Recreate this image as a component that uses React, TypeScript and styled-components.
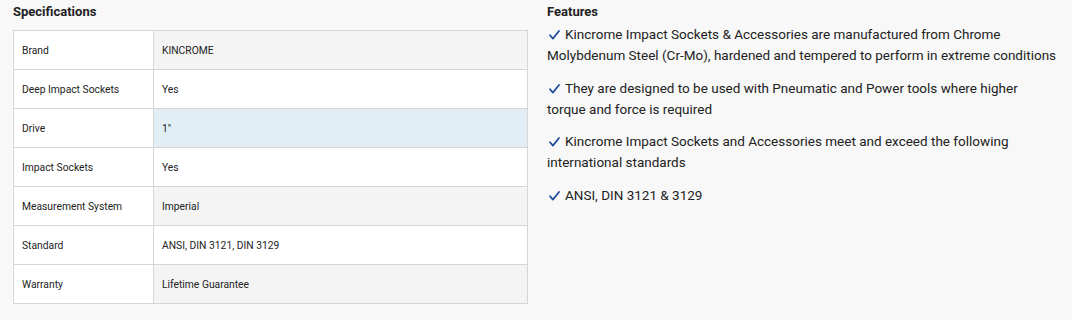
import React from "react";
import styled, { createGlobalStyle } from "styled-components";

const Global = createGlobalStyle`
  html, body { margin: 0; padding: 0; background: #f8f8f8; }
  body { font-family: Roboto, "Liberation Sans", sans-serif; color: #222; }
`;

const Page = styled.div`
  display: grid;
  grid-template-columns: 515px 511px;
  column-gap: 19px;
  padding: 3px 0 0 13px;
  width: 1072px;
  height: 320px;
  box-sizing: border-box;
`;

const Heading = styled.h3`
  margin: 0;
  font-size: 13px;
  font-weight: 700;
  line-height: 17px;
  color: #222;
`;

const Table = styled.table`
  margin-top: 10px;
  width: 100%;
  table-layout: fixed;
  border-collapse: collapse;
  font-size: 10.3px;
`;

const Label = styled.td`
  width: 140px;
  height: 39px;
  padding: 0 8px;
  border: 1px solid #d6d6d6;
  background: #fff;
  box-sizing: border-box;
`;

const Value = styled.td<{ $tone: "gray" | "white" | "blue" }>`
  height: 39px;
  padding: 0 8px;
  border: 1px solid #d6d6d6;
  box-sizing: border-box;
  background: ${(p) =>
    p.$tone === "gray" ? "#f4f4f4" : p.$tone === "blue" ? "#e2eef5" : "#fff"};
`;

const Features = styled.div``;

const Feature = styled.p`
  margin: 0 0 11.5px 0;
  font-size: 13.5px;
  line-height: 21px;
  color: #222;
  &:first-of-type { margin-top: 4px; }
`;

const Check = styled.svg`
  width: 11px;
  height: 10px;
  margin: 0 5px 0 2px;
  vertical-align: -1px;
`;

const CheckMark = () => (
  <Check viewBox="0 0 11 10" aria-hidden="true">
    <path d="M1 5.2 L3.9 8.6 L10 1" fill="none" stroke="#1e4a9a" strokeWidth="1.7" strokeLinecap="round" strokeLinejoin="round" />
  </Check>
);

const rows: [string, string, "gray" | "white" | "blue"][] = [
  ["Brand", "KINCROME", "gray"],
  ["Deep Impact Sockets", "Yes", "white"],
  ["Drive", "1\"", "blue"],
  ["Impact Sockets", "Yes", "white"],
  ["Measurement System", "Imperial", "gray"],
  ["Standard", "ANSI, DIN 3121, DIN 3129", "white"],
  ["Warranty", "Lifetime Guarantee", "gray"],
];

const features = [
  "Kincrome Impact Sockets & Accessories are manufactured from Chrome Molybdenum Steel (Cr-Mo), hardened and tempered to perform in extreme conditions",
  "They are designed to be used with Pneumatic and Power tools where higher torque and force is required",
  "Kincrome Impact Sockets and Accessories meet and exceed the following international standards",
  "ANSI, DIN 3121 & 3129",
];

export default function App() {
  return (
    <>
      <Global />
      <Page>
        <section>
          <Heading>Specifications</Heading>
          <Table>
            <tbody>
              {rows.map(([k, v, t]) => (
                <tr key={k}>
                  <Label>{k}</Label>
                  <Value $tone={t}>{v}</Value>
                </tr>
              ))}
            </tbody>
          </Table>
        </section>
        <Features>
          <Heading>Features</Heading>
          {features.map((f) => (
            <Feature key={f}>
              <CheckMark />
              {f}
            </Feature>
          ))}
        </Features>
      </Page>
    </>
  );
}
